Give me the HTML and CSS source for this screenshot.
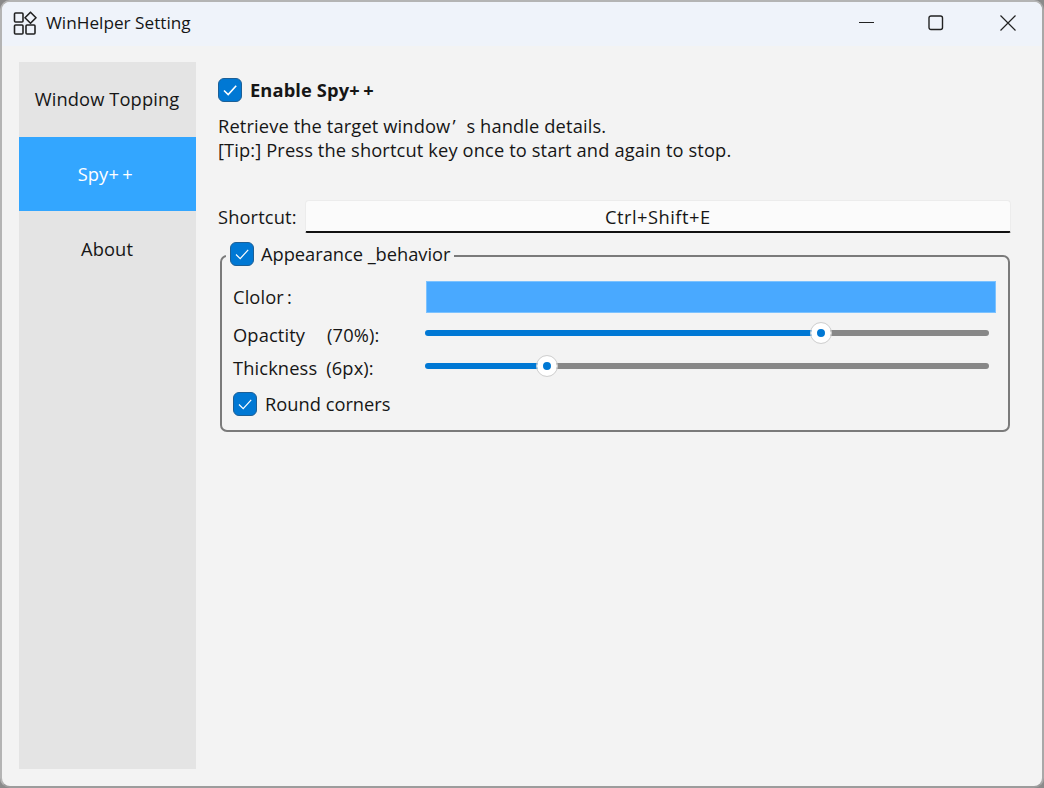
FILE: index.html
```html
<!DOCTYPE html>
<html>
<head>
  <title>WinHelper Setting</title>
  <meta charset="UTF-8">
  <link rel="stylesheet" href="styles.css">
</head>
<body>
  <div class="window">
    <div class="titlebar">
      <svg class="app-icon" width="24" height="24" viewBox="0 0 24 24" fill="none" stroke="#222" stroke-width="1.6">
        <rect x="1.5" y="2" width="8.5" height="9" rx="1"/>
        <path d="M17.5 1.2 L23 6.7 L17.5 12.2 L12 6.7 Z" stroke-linejoin="round"/>
        <rect x="1.5" y="14" width="8.5" height="9" rx="1"/>
        <rect x="13" y="14" width="9" height="9" rx="1"/>
      </svg>
      <span class="title">WinHelper Setting</span>
      <div class="win-buttons">
        <svg width="16" height="16" viewBox="0 0 16 16" stroke="#222" fill="none"><path d="M0 7.5H15"/></svg>
        <svg width="16" height="16" viewBox="0 0 16 16" stroke="#222" fill="none" stroke-width="1.4"><rect x="1" y="1" width="13.5" height="13.5" rx="2"/></svg>
        <svg class="win-close" width="16" height="16" viewBox="0 0 16 16" stroke="#222" fill="none" stroke-width="1.2"><path d="M0.5 0.5L15.5 15.5M15.5 0.5L0.5 15.5"/></svg>
      </div>
    </div>
    <div class="content">
      <nav class="nav">
        <div class="nav-item topping">Window Topping</div>
        <div class="nav-item active">Spy<span class="plus">++</span></div>
        <div class="nav-item">About</div>
      </nav>
      <main class="main">
        <label class="check check-head">
          <span class="box"><svg width="24" height="24" viewBox="0 0 24 24" fill="none" stroke="#fff" stroke-width="1.6"><path d="M6 12.5L10.2 16.6L18.2 7.8"/></svg></span>
          <b>Enable Spy<span class="plus">++</span></b>
        </label>
        <p class="desc">Retrieve the target window<span class="wide">’</span>s handle details.<br>[Tip:] Press the shortcut key once to start and again to stop.</p>
        <div class="shortcut">
          <span>Shortcut:</span>
          <div class="shortcut-input">Ctrl+Shift+E</div>
        </div>
        <section class="group">
          <label class="check group-title">
            <span class="box"><svg width="24" height="24" viewBox="0 0 24 24" fill="none" stroke="#fff" stroke-width="1.2"><path d="M6 12.5L10.2 16.6L18.2 7.8"/></svg></span>
            Appearance _behavior
          </label>
          <div class="row row-color">
            <span class="row-label">Clolor<span class="colon">:</span></span>
            <div class="swatch"></div>
          </div>
          <div class="row row-opacity">
            <span class="row-label">Opactity<span class="gap-a"></span>(70%):</span>
            <div class="slider">
              <div class="fill" style="width:396px"></div>
              <div class="thumb"></div>
              <div class="rest"></div>
            </div>
          </div>
          <div class="row row-thick">
            <span class="row-label">Thickness<span class="gap-b"></span>(6px):</span>
            <div class="slider">
              <div class="fill" style="width:122px"></div>
              <div class="thumb"></div>
              <div class="rest"></div>
            </div>
          </div>
          <label class="check check-round">
            <span class="box"><svg width="24" height="24" viewBox="0 0 24 24" fill="none" stroke="#fff" stroke-width="1.2"><path d="M6 12.5L10.2 16.6L18.2 7.8"/></svg></span>
            Round corners
          </label>
        </section>
      </main>
    </div>
  </div>
</body>
</html>
```

FILE: styles.css
```css
* {
  box-sizing: border-box;
}
html, body {
  margin: 0;
  height: 100%;
  background: #8a8a8a;
}
body {
  font-family: "Open Sans", "Noto Sans", sans-serif;
  font-size: 18.3px;
  letter-spacing: 0.12px;
  color: #161616;
  overflow: hidden;
}
.window {
  width: 1044px;
  height: 788px;
  display: flex;
  flex-direction: column;
  background: #f3f3f3;
  border: 2px solid #b4b4b4;
  border-right-color: #a8a8a8;
  border-bottom-color: #9c9c9c;
  border-radius: 10px;
  overflow: hidden;
}
.titlebar {
  height: 44px;
  display: flex;
  align-items: center;
  padding-left: 11px;
  background: #eff3fa;
}
.app-icon {
  margin-right: 9px;
  margin-bottom: 2px;
}
.title {
  font-size: 17.2px;
  letter-spacing: 0;
  margin-bottom: 4px;
}
.win-buttons {
  margin-left: auto;
  display: flex;
  gap: 53px;
  padding-right: 26px;
  margin-bottom: 2px;
}
.win-close {
  margin-left: 3px;
}
.content {
  flex: 1;
  display: flex;
  min-height: 0;
  padding: 16px 0 17px 17px;
}
.nav {
  width: 177px;
  background: #e4e4e4;
  flex-shrink: 0;
}
.nav-item {
  height: 74.5px;
  display: flex;
  align-items: center;
  justify-content: center;
  padding-right: 1px;
}
.nav-item.topping {
  padding-bottom: 2px;
}
.nav-item.active {
  background: #33a6ff;
  color: #fff;
}
.main {
  flex: 1;
  padding: 16px 31px 0 22px;
}
.check {
  display: flex;
  align-items: center;
  gap: 8px;
}
.box {
  width: 24px;
  height: 24px;
  background: #0078d4;
  border: 1px solid #1c5f96;
  border-radius: 6px;
  display: flex;
  align-items: center;
  justify-content: center;
  flex-shrink: 0;
}
.box svg {
  flex-shrink: 0;
}
.check-head {
  height: 24px;
}
.check-head b {
  padding-bottom: 2px;
}
.plus {
  letter-spacing: 3.5px;
}
.desc {
  margin: 12px 0 0;
  line-height: 24px;
}
.wide {
  display: inline-block;
  width: 16px;
  padding-left: 2px;
}
.shortcut {
  display: flex;
  align-items: center;
  gap: 8px;
  margin-top: 38px;
}
.shortcut-input {
  flex: 1;
  height: 33px;
  background: #fbfbfb;
  border: 1px solid #ececec;
  border-bottom: 2px solid #111;
  border-radius: 4px 4px 2px 2px;
  text-align: center;
  line-height: 32px;
  letter-spacing: 0.5px;
}
.group {
  position: relative;
  height: 177px;
  margin: 22px 1px 0 2px;
  padding: 24px 12px 0 11px;
  border: 2px solid #7a7a7a;
  border-radius: 7px;
}
.group-title {
  position: absolute;
  left: 4px;
  top: -16px;
  padding: 0 4px;
  gap: 7px;
  letter-spacing: -0.03px;
  background: #f3f3f3;
}
.row {
  display: flex;
  align-items: center;
}
.row-label {
  width: 192px;
  white-space: pre;
}
.row-color .row-label {
  margin-bottom: 2px;
}
.row-opacity .row-label,
.row-thick .row-label {
  padding-top: 4px;
}
.colon {
  margin-left: 3px;
}
.gap-a {
  display: inline-block;
  width: 22px;
}
.gap-b {
  display: inline-block;
  width: 9px;
}
.swatch {
  width: 570px;
  height: 32px;
  margin-left: 1px;
  background: #49a9ff;
  border: 1px solid #7cc2ff;
}
.row-color {
  height: 32px;
}
.row-opacity {
  margin-top: 3px;
  height: 33px;
}
.row-thick {
  height: 33px;
}
.slider {
  width: 564px;
  display: flex;
  align-items: center;
  position: relative;
  height: 24px;
}
.fill {
  height: 6px;
  background: #0078d4;
  border-radius: 3px 0 0 3px;
}
.rest {
  flex: 1;
  height: 6px;
  background: #878787;
  border-radius: 0 3px 3px 0;
}
.thumb {
  width: 20px;
  height: 20px;
  margin: 0 -10px;
  background: #0078d4;
  border: 6px solid #fff;
  outline: 1px solid #d0d0d0;
  border-radius: 50%;
  position: relative;
  z-index: 1;
}
.check-round {
  margin-top: 9px;
  letter-spacing: 0;
}
```
